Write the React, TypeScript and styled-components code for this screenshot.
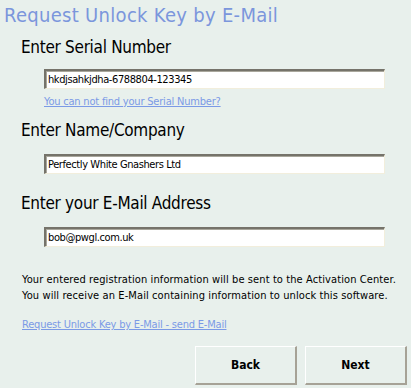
import styled, { createGlobalStyle } from "styled-components";

const GlobalStyle = createGlobalStyle`
  html, body {
    margin: 0;
    padding: 0;
    background: #e8f0ec;
  }
  body {
    font-family: "DejaVu Sans Condensed", "DejaVu Sans", sans-serif;
  }
`;

const Page = styled.div`
  width: 411px;
  height: 388px;
  background: #e8f0ec;
  overflow: hidden;
  display: flex;
  flex-direction: column;
`;

const Title = styled.h1`
  margin: 3px 0 0 4px;
  font-size: 20px;
  line-height: 24px;
  letter-spacing: 0.3px;
  font-weight: normal;
  color: #7b96dc;
`;

const Form = styled.div`
  padding-left: 21px;
  display: flex;
  flex-direction: column;
`;

const Heading = styled.h2<{ $top: number }>`
  margin: ${(p) => p.$top}px 0 0;
  font-size: 17px;
  line-height: 22px;
  letter-spacing: -0.3px;
  font-weight: normal;
  color: #000;
`;

const Field = styled.input<{ $top: number }>`
  box-sizing: border-box;
  margin: ${(p) => p.$top}px 0 0 23px;
  width: 341px;
  height: 20px;
  padding: 0 2px;
  font-family: inherit;
  font-size: 11px;
  letter-spacing: -0.4px;
  color: #000;
  background: #fff;
  border-style: solid;
  border-width: 2px 1px 1px 2px;
  border-color: #75736a #f2eedc #f2eedc #75736a;
  box-shadow: inset 1px 1px 0 #a9a79c;
  outline: none;
`;

const Link = styled.a<{ $top: number; $left: number }>`
  display: block;
  margin: ${(p) => p.$top}px 0 0 ${(p) => p.$left}px;
  font-size: 11px;
  line-height: 13px;
  letter-spacing: -0.2px;
  color: #7b9ae6;
  text-decoration: underline;
  cursor: pointer;
`;

const Note = styled.p`
  margin: 25px 0 0 1px;
  font-size: 11px;
  line-height: 16px;
  letter-spacing: 0.1px;
  color: #000;
`;

const Buttons = styled.div`
  display: flex;
  justify-content: flex-end;
  gap: 8px;
  margin: 15px 4px 0 0;
`;

const Button = styled.button`
  width: 102px;
  height: 39px;
  box-sizing: border-box;
  background: #e8f0ec;
  border-style: solid;
  border-width: 1px 2px 2px 1px;
  border-color: #fff #a6a296 #a6a296 #fff;
  font-family: inherit;
  font-size: 12px;
  font-weight: bold;
  color: #000;
  padding: 0;
`;

export default function App() {
  return (
    <Page>
      <GlobalStyle />
      <Title>Request Unlock Key by E-Mail</Title>
      <Form>
        <Heading $top={9}>Enter Serial Number</Heading>
        <Field $top={11} defaultValue="hkdjsahkjdha-6788804-123345" />
        <Link $top={6} $left={23}>You can not find your Serial Number?</Link>
        <Heading $top={11}>Enter Name/Company</Heading>
        <Field $top={13} defaultValue="Perfectly White Gnashers Ltd" />
        <Heading $top={18}>Enter your E-Mail Address</Heading>
        <Field $top={13} defaultValue="bob@pwgl.com.uk" />
        <Note>
          Your entered registration information will be sent to the Activation Center.
          <br />
          You will receive an E-Mail containing information to unlock this software.
        </Note>
        <Link $top={14} $left={1}>Request Unlock Key by E-Mail - send E-Mail</Link>
      </Form>
      <Buttons>
        <Button>Back</Button>
        <Button>Next</Button>
      </Buttons>
    </Page>
  );
}
